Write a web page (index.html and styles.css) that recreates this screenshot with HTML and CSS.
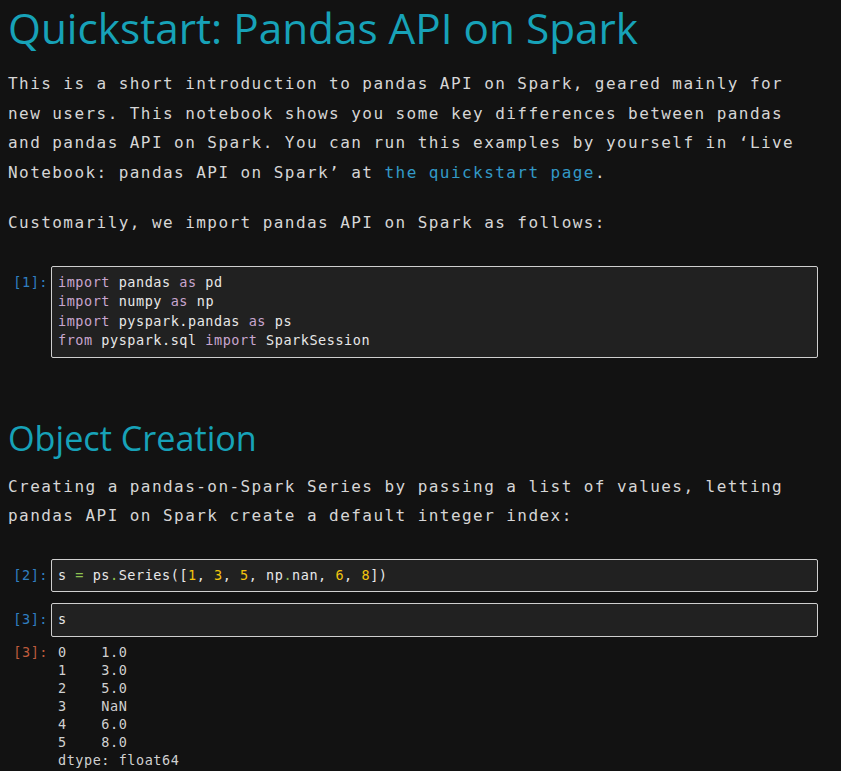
FILE: index.html
```html
<!DOCTYPE html>
<html lang="en">
<head>
<meta charset="utf-8">
<title>Quickstart: Pandas API on Spark</title>
<link rel="stylesheet" href="styles.css">
</head>
<body>
<main class="page">
  <h1 class="title">Quickstart: Pandas API on Spark</h1>
  <p class="text">This is a short introduction to pandas API on Spark, geared mainly for new users. This notebook shows you some key differences between pandas and pandas API on Spark. You can run this examples by yourself in ‘Live Notebook: pandas API on Spark’ at <a class="link" href="#">the quickstart page</a>.</p>
  <p class="text text-last">Customarily, we import pandas API on Spark as follows:</p>

  <div class="cell cell-first">
    <div class="prompt">[1]:</div>
    <pre class="code"><span class="kw">import</span> pandas <span class="kw">as</span> pd
<span class="kw">import</span> numpy <span class="kw">as</span> np
<span class="kw">import</span> pyspark.pandas <span class="kw">as</span> ps
<span class="kw">from</span> pyspark.sql <span class="kw">import</span> SparkSession</pre>
  </div>

  <h2 class="subtitle">Object Creation</h2>
  <p class="text text-last">Creating a pandas-on-Spark Series by passing a list of values, letting pandas API on Spark create a default integer index:</p>

  <div class="cell cell-first">
    <div class="prompt">[2]:</div>
    <pre class="code">s <span class="op">=</span> ps<span class="op">.</span>Series([<span class="num">1</span>, <span class="num">3</span>, <span class="num">5</span>, np<span class="op">.</span>nan, <span class="num">6</span>, <span class="num">8</span>])</pre>
  </div>
  <div class="cell cell-next">
    <div class="prompt">[3]:</div>
    <pre class="code">s</pre>
  </div>
  <div class="output">
    <div class="prompt prompt-out">[3]:</div>
    <pre class="out">0    1.0
1    3.0
2    5.0
3    NaN
4    6.0
5    8.0
dtype: float64</pre>
  </div>
</main>
</body>
</html>
```

FILE: styles.css
```css
html, body {
  margin: 0;
  padding: 0;
  background: #121212;
}

.page {
  padding: 0 23px 0 8px;
  color: #d6d6d6;
}

.title {
  margin: 0;
  font-family: "Open Sans", "Noto Sans", sans-serif;
  font-weight: 400;
  font-size: 42.3px;
  line-height: 56px;
  color: #17a2b8;
}

.subtitle {
  margin: 58px 0 0 0;
  font-family: "Open Sans", "Noto Sans", sans-serif;
  font-weight: 400;
  font-size: 34.2px;
  line-height: 43px;
  color: #17a2b8;
}

.text {
  margin: 13px 0 20px 0;
  font-family: "DejaVu Sans Mono", monospace;
  font-size: 16px;
  letter-spacing: 1.44px;
  line-height: 29.7px;
  color: #d6d6d6;
}

.text-last {
  margin-bottom: 0;
}

.link {
  color: #3399c7;
  text-decoration: none;
}

.cell {
  display: flex;
  align-items: flex-start;
}

.cell-first {
  margin-top: 28px;
}

.cell-next {
  margin-top: 11px;
}

.prompt {
  width: 40px;
  flex: none;
  padding: 7px 3px 0 0;
  text-align: right;
  font-family: "DejaVu Sans Mono", monospace;
  font-size: 13.5px;
  letter-spacing: 0.54px;
  line-height: 19.5px;
  color: #307fc1;
}

.prompt-out {
  padding-top: 0;
  color: #bf5b3d;
}

.code {
  flex: 1;
  margin: 0;
  padding: 6px 6px;
  background: #212121;
  border: 1px solid #cfcfcf;
  border-radius: 2px;
  font-family: "DejaVu Sans Mono", monospace;
  font-size: 13.5px;
  letter-spacing: 0.54px;
  line-height: 19.5px;
  color: #e8e8e8;
}

.kw { color: #c9a6cf; }
.op { color: #8cc152; }
.num { color: #f2c40f; }

.output {
  display: flex;
  align-items: flex-start;
  margin-top: 6px;
}

.out {
  margin: 0;
  padding-left: 7px;
  font-family: "DejaVu Sans Mono", monospace;
  font-size: 13.5px;
  letter-spacing: 0.54px;
  line-height: 18px;
  color: #d0d0d0;
}
```
